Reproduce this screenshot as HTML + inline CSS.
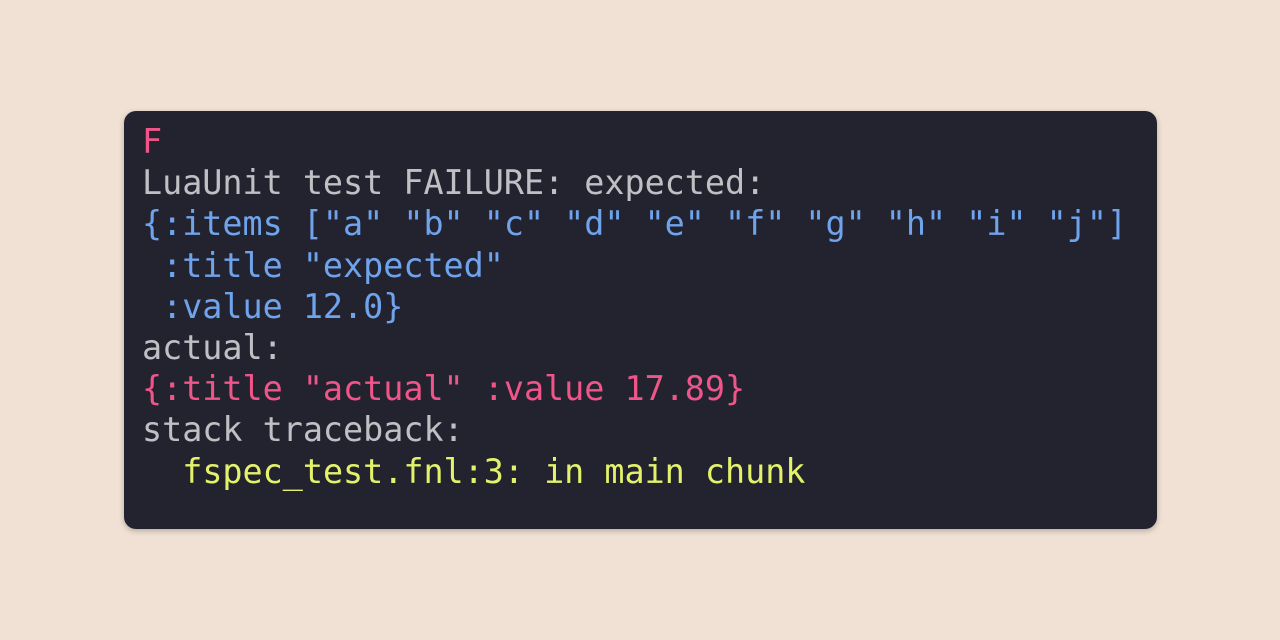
<!DOCTYPE html>
<html><head><style>
html,body{margin:0;padding:0;width:1280px;height:640px;background:#f0e1d4;overflow:hidden}
.box{position:absolute;left:124px;top:111px;width:1033px;height:418px;background:#232330;border-radius:12px;box-shadow:0 2px 6px rgba(0,0,0,.25)}
pre{position:absolute;left:18px;top:10px;margin:0;font-family:"DejaVu Sans Mono","Liberation Mono",monospace;font-size:33.4px;line-height:41.2px;color:#c0c0c4;white-space:pre}
.r{color:#f0558a}.b{color:#6fa3ec}.y{color:#e3f26a}
</style></head><body>
<div class="box"><pre><span class="r">F</span>
LuaUnit test FAILURE: expected:
<span class="b">{:items ["a" "b" "c" "d" "e" "f" "g" "h" "i" "j"]
 :title "expected"
 :value 12.0}</span>
actual:
<span class="r">{:title "actual" :value 17.89}</span>
stack traceback:
  <span class="y">fspec_test.fnl:3: in main chunk</span></pre></div>
</body></html>
